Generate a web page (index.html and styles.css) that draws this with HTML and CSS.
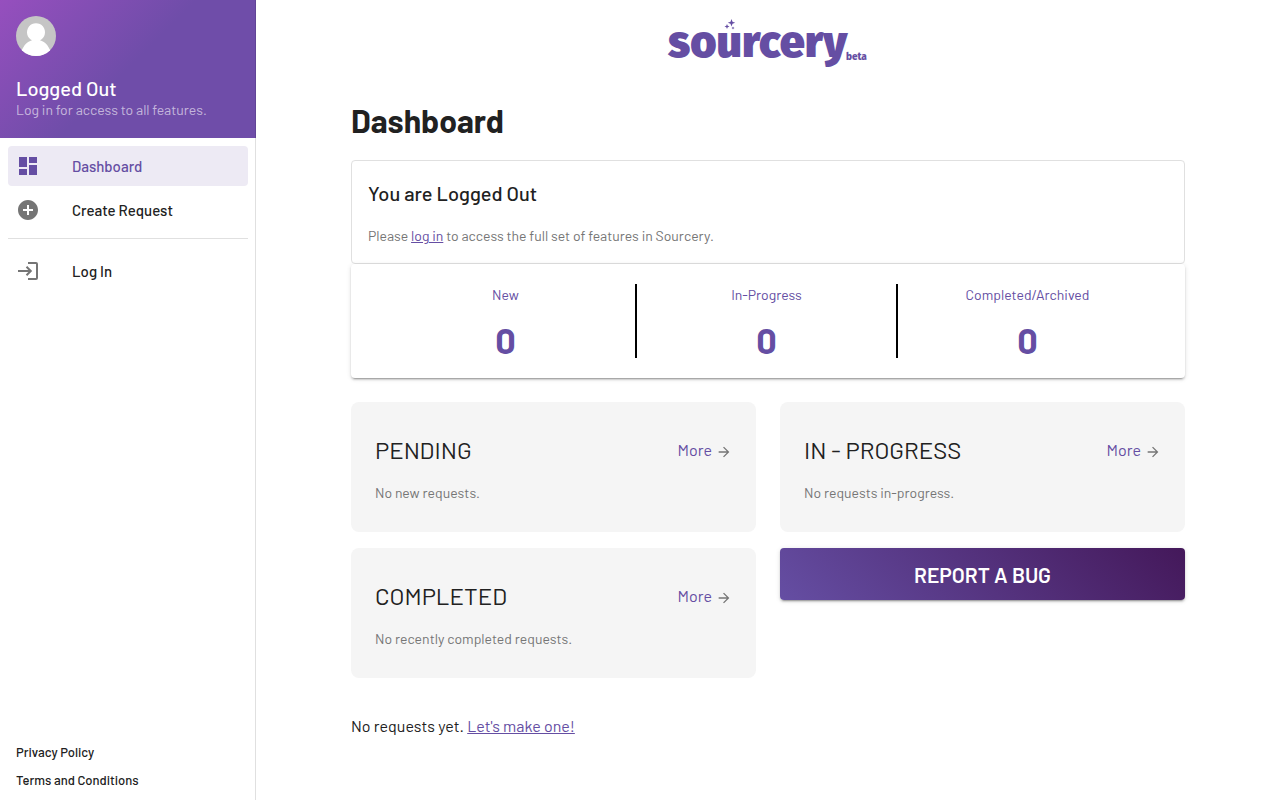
FILE: index.html
```html
<!DOCTYPE html>
<html lang="en">
<head>
<meta charset="utf-8">
<meta name="viewport" content="width=device-width, initial-scale=1">
<title>Dashboard - Sourcery</title>
<link rel="stylesheet" href="styles.css">
</head>
<body>
<div class="app">
  <aside class="sidebar">
    <div class="profile">
      <svg class="avatar" viewBox="0 0 40 40" aria-hidden="true">
        <defs><clipPath id="avatar-clip"><circle cx="20" cy="20" r="20"/></clipPath></defs>
        <g clip-path="url(#avatar-clip)">
          <rect width="40" height="40" fill="#c5c5c5"/>
          <path fill="#fff" d="M5 36C8 29 11 26 16 24.300a9 9 0 1 1 8 0C29 26 32 29 35 36V40H5z"/>
        </g>
      </svg>
      <div class="profile-name">Logged Out</div>
      <div class="profile-note">Log in for access to all features.</div>
    </div>
    <div class="sidebar-body">
      <nav class="menu">
        <a class="menu-item active" href="#dashboard">
          <svg class="icon" viewBox="0 0 24 24" aria-hidden="true"><path d="M3 13h8V3H3v10zm0 8h8v-6H3v6zm10 0h8V11h-8v10zm0-18v6h8V3h-8z"/></svg>
          <span>Dashboard</span>
        </a>
        <a class="menu-item" href="#create">
          <svg class="icon" viewBox="0 0 24 24" aria-hidden="true"><path d="M12 2C6.480 2 2 6.480 2 12s4.480 10 10 10 10-4.480 10-10S17.520 2 12 2zm5 11h-4v4h-2v-4H7v-2h4V7h2v4h4v2z"/></svg>
          <span>Create Request</span>
        </a>
        <hr class="divider">
        <a class="menu-item" href="#login">
          <svg class="icon outline" viewBox="0 0 24 24" aria-hidden="true"><path d="M12 4h8a1 1 0 0 1 1 1v14a1 1 0 0 1-1 1h-8M2 12h12.500M10.500 7.700l4.300 4.300-4.300 4.300"/></svg>
          <span>Log In</span>
        </a>
      </nav>
      <div class="legal">
        <a href="#privacy">Privacy Policy</a>
        <a href="#terms">Terms and Conditions</a>
      </div>
    </div>
  </aside>

  <main class="main">
    <header class="brand">
      <svg class="logo" viewBox="0 0 200 50" role="img" aria-label="sourcery beta">
        <text class="logo-word" x="0" y="39">sourcery</text>
        <text class="logo-tag" x="178" y="42">beta</text>
        <path d="M63.500 1l1 2.700 2.700 1-2.700 1-1 2.700-1-2.700-2.700-1 2.700-1zM59 6l.700 1.800 1.800.700-1.800.700-.700 1.800-.700-1.800-1.800-.700 1.800-.700zM65 8.500l.500 1 1 .500-1 .500-.500 1-.500-1-1-.500 1-.500z"/>
      </svg>
    </header>
    <h1 class="title">Dashboard</h1>

    <section class="notice">
      <h2 class="notice-title">You are Logged Out</h2>
      <p class="muted">Please <a class="link" href="#login">log in</a> to access the full set of features in Sourcery.</p>
    </section>

    <section class="stats">
      <div class="stat"><div class="stat-label">New</div><div class="stat-value">0</div></div>
      <div class="stat"><div class="stat-label">In-Progress</div><div class="stat-value">0</div></div>
      <div class="stat"><div class="stat-label">Completed/Archived</div><div class="stat-value">0</div></div>
    </section>

    <div class="panels">
      <section class="panel">
        <div class="panel-head">
          <h2 class="panel-title">PENDING</h2>
          <a class="more" href="#pending">More <svg class="arrow" viewBox="0 0 24 24" aria-hidden="true"><path d="M12 4l-1.410 1.410L16.170 11H4v2h12.170l-5.580 5.590L12 20l8-8z"/></svg></a>
        </div>
        <p class="muted">No new requests.</p>
      </section>
      <section class="panel">
        <div class="panel-head">
          <h2 class="panel-title">IN - PROGRESS</h2>
          <a class="more" href="#in-progress">More <svg class="arrow" viewBox="0 0 24 24" aria-hidden="true"><path d="M12 4l-1.410 1.410L16.170 11H4v2h12.170l-5.580 5.590L12 20l8-8z"/></svg></a>
        </div>
        <p class="muted">No requests in-progress.</p>
      </section>
      <section class="panel">
        <div class="panel-head">
          <h2 class="panel-title">COMPLETED</h2>
          <a class="more" href="#completed">More <svg class="arrow" viewBox="0 0 24 24" aria-hidden="true"><path d="M12 4l-1.410 1.410L16.170 11H4v2h12.170l-5.580 5.590L12 20l8-8z"/></svg></a>
        </div>
        <p class="muted">No recently completed requests.</p>
      </section>
      <button class="report" type="button">REPORT A BUG</button>
    </div>

    <p class="empty">No requests yet. <a class="link" href="#create">Let's make one!</a></p>
  </main>
</div>
</body>
</html>
```
FILE: styles.css
```css
* {
  box-sizing: border-box;
}

body {
  margin: 0;
  font-family: Barlow, Roboto, "Liberation Sans", sans-serif;
  font-size: 16px;
  line-height: 24px;
  color: #212121;
  background: #fff;
}

h1, h2, p {
  margin: 0;
}

a {
  color: inherit;
  text-decoration: none;
}

.app {
  display: flex;
  min-height: 100vh;
}

.sidebar {
  display: flex;
  flex-direction: column;
  flex: 0 0 256px;
}

.profile {
  padding: 16px 16px 18px;
  border-right: 1px solid #614596;
  color: #fff;
  background: linear-gradient(135deg, #964fbe 0%, #6f4da9 50%);
}

.avatar {
  display: block;
  width: 40px;
  height: 40px;
  margin-bottom: 20px;
}

.profile-name {
  font-size: 20px;
  font-weight: 500;
  line-height: 24px;
}

.profile-note {
  font-size: 14px;
  line-height: 20px;
  color: rgba(255, 255, 255, 0.6);
}

.sidebar-body {
  display: flex;
  flex: 1;
  flex-direction: column;
  justify-content: space-between;
  padding: 8px 7px 6px 8px;
  border-right: 1px solid #e0e0e0;
}

.menu {
  display: flex;
  flex-direction: column;
}

.menu-item {
  display: flex;
  align-items: center;
  gap: 32px;
  height: 40px;
  margin-bottom: 4px;
  padding: 0 8px;
  border-radius: 4px;
  font-size: 15px;
  font-weight: 500;
  line-height: 22px;
}

.menu-item.active {
  color: #654ea3;
  background: #edeaf4;
}

.icon {
  width: 24px;
  height: 24px;
  fill: #757575;
}

.active .icon {
  fill: #654ea3;
}

.icon.outline {
  fill: none;
  stroke: #757575;
  stroke-width: 2;
}

.divider {
  width: 100%;
  height: 1px;
  margin: 4px 0 12px;
  border: 0;
  background: #e0e0e0;
}

.legal {
  display: flex;
  flex-direction: column;
  padding: 0 8px;
  font-size: 13px;
  font-weight: 500;
  line-height: 28px;
}

.main {
  flex: 1;
  padding: 18px 95px 48px;
}

.brand {
  display: flex;
  justify-content: center;
}

.logo {
  width: 200px;
  height: 50px;
  overflow: visible;
  fill: #654ea3;
}

.logo-word {
  font-family: "Fira Sans", "Noto Sans", "Open Sans", sans-serif;
  font-size: 45px;
  font-weight: 900;
}

.logo-tag {
  font-family: "Fira Sans", "Noto Sans", "Open Sans", sans-serif;
  font-size: 10px;
  font-weight: 800;
}

.title {
  margin: 32px 0 20px;
  font-size: 32px;
  font-weight: 700;
  line-height: 40px;
}

.notice {
  padding: 16px;
  border: 1px solid #e0e0e0;
  border-radius: 4px;
}

.notice-title {
  margin-bottom: 16px;
  font-size: 20px;
  font-weight: 500;
  line-height: 32px;
}

.muted {
  font-size: 14px;
  line-height: 22px;
  color: #757575;
}

.link {
  color: #654ea3;
  text-decoration: underline;
}

.stats {
  display: grid;
  grid-template-columns: repeat(3, 1fr);
  margin-bottom: 24px;
  padding: 20px 26px 20px 25px;
  border-radius: 4px;
  background: #fff;
  box-shadow: 0 3px 1px -2px rgba(0, 0, 0, 0.2), 0 2px 2px rgba(0, 0, 0, 0.14), 0 1px 5px rgba(0, 0, 0, 0.12);
}

.stat {
  border-right: 2px solid #000;
  color: #654ea3;
  text-align: center;
}

.stat:last-child {
  border-color: transparent;
}

.stat-label {
  margin-bottom: 16px;
  font-size: 14px;
  line-height: 22px;
}

.stat-value {
  font-size: 36px;
  font-weight: 700;
  line-height: 36px;
}

.panels {
  display: grid;
  grid-template-columns: 1fr 1fr;
  gap: 16px 24px;
  align-items: start;
  margin-bottom: 36px;
}

.panel {
  padding: 32px 24px 28px;
  border-radius: 8px;
  background: #f5f5f5;
}

.panel-head {
  display: flex;
  align-items: center;
  justify-content: space-between;
  margin-bottom: 16px;
}

.panel-title {
  font-size: 24px;
  font-weight: 400;
  line-height: 32px;
}

.more {
  display: flex;
  align-items: center;
  gap: 4px;
  color: #654ea3;
}

.arrow {
  width: 16px;
  height: 16px;
  margin-top: 4px;
  fill: #757575;
}

.report {
  height: 52px;
  padding: 0 16px;
  border: 0;
  border-radius: 4px;
  font-family: inherit;
  font-size: 21px;
  font-weight: 600;
  color: #fff;
  background: linear-gradient(45deg, #654ea3 0%, #44185a 100%);
  box-shadow: 0 3px 1px -2px rgba(0, 0, 0, 0.2), 0 2px 2px rgba(0, 0, 0, 0.14), 0 1px 5px rgba(0, 0, 0, 0.12);
}
```
